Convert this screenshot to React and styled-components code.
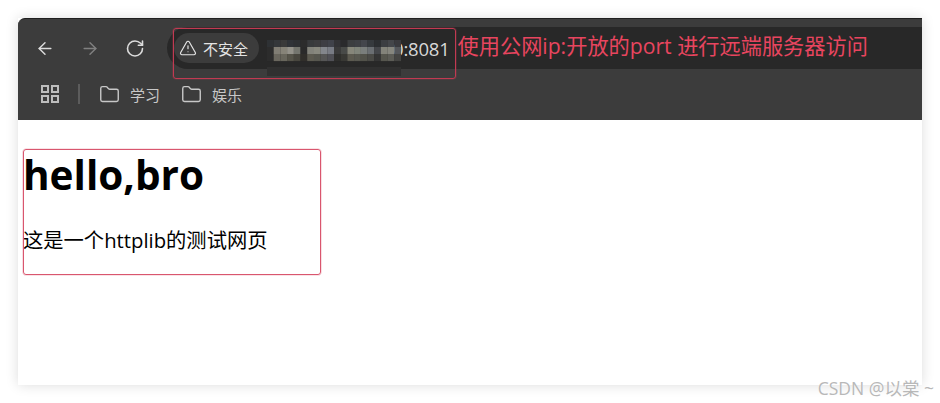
import React from "react";
import styled, { createGlobalStyle } from "styled-components";
import { ArrowLeft, ArrowRight, RotateCw, TriangleAlert, Folder } from "lucide-react";

const cjk = `"Noto Sans CJK SC", sans-serif`;
const Global = createGlobalStyle`
  html, body { margin: 0; padding: 0; background: #fff; }
  body { width: 940px; height: 403px; overflow: hidden; font-family: "Open Sans", ${cjk}; }
`;
const Page = styled.div`
  position: relative;
  width: 940px; height: 403px; padding: 18px; box-sizing: border-box; overflow: hidden;
`;
const Win = styled.div`
  width: 904px; height: 367px; background: #fff;
  box-shadow: 0 0 12px rgba(0,0,0,.14);
  display: flex; flex-direction: column;
`;
const Chrome = styled.header`
  height: 102px; background: #3c3c3c; border-top: 1px solid #1e1e1e; box-sizing: border-box;
  border-top-left-radius: 7px; display: flex; flex-direction: column;
`;
const NavRow = styled.div`
  height: 51px; padding-top: 8px; box-sizing: border-box; display: flex; align-items: stretch; padding-left: 17px;
`;
const NavBtns = styled.div`
  display: flex; align-items: center; gap: 25px; width: 132px; flex: none;
`;
const NavBtn = styled.span`
  display: flex; width: 20px; justify-content: center; color: ${p => (p.$off ? "#808080" : "#dcdcdc")};
`;
const UrlBar = styled.div`
  flex: 1; height: 42px; background: #282828; border-radius: 21px 0 0 21px;
  display: flex; align-items: center; padding-left: 7px;
`;
const Chip = styled.div`
  height: 30px; width: 85px; flex: none; background: #3c3c3c; border-radius: 15px; box-sizing: border-box;
  display: flex; align-items: center; gap: 6px; padding-left: 5px; color: #e4e4e4; font: 15px ${cjk};
`;
const Mosaic = styled.svg`
  flex: none; margin-left: 8px; display: block; align-self: flex-start; margin-top: 13px;
  position: relative; z-index: 1; filter: blur(.4px);
`;
const Port = styled.span`
  color: #d8d8d8; font: 18.5px "Open Sans", sans-serif; margin-left: -8px; letter-spacing: -.2px;
`;
const Note = styled.span`
  color: #e8455f; font: 21.2px "Open Sans", ${cjk}; margin: 0 0 8px 8px; white-space: nowrap;
`;
const Bookmarks = styled.div`
  flex: 1; display: flex; align-items: center; padding-left: 22px; padding-bottom: 2px; color: #bdbdbd;
`;
const Apps = styled.svg`
  flex: none; display: block;
`;
const Sep = styled.span`
  width: 2px; height: 20px; background: #5c5c5c; margin: 0 19px 0 18px; flex: none;
`;
const Mark = styled.span`
  display: flex; align-items: center; gap: 10px; font: 15px ${cjk}; color: #c8c8c8; margin-right: 21px;
`;
const Body = styled.main`
  flex: 1; padding: 4px 5px; color: #000;
`;
const Heading = styled.h1`
  margin: 23px 0 0 0; font: 700 40.5px/56px "Open Sans", ${cjk};
`;
const Para = styled.p`
  margin: 23px 0 0 0; font: 20.3px/28px "Open Sans", ${cjk};
`;
const Outline = styled.div`
  position: absolute; box-sizing: border-box; border: 1px solid ${p => p.$c};
  box-shadow: 0 0 0 .6px ${p => p.$c}55;
  border-radius: 3px; left: ${p => p.$x}px; top: ${p => p.$y}px; width: ${p => p.$w}px; height: ${p => p.$h}px;
  pointer-events: none;
`;
const Watermark = styled.span`
  position: absolute; right: 6px; top: 375px; font: 17.5px "Open Sans", ${cjk}; color: #b8b8b8; white-space: nowrap;
  text-shadow: 0 0 1px #fff;
`;

const rows = [
  ["#2e3134","#34373a","#3a3a3a","#303338","#2e3033","#2c2c2c","#383a3c","#3c3c3e","#3e3e44","#40424a","#333336","#2a2a2c","#3c3e40","#3e4044","#44464c","#363a3e","#2c2f32","#3c3e42","#44464a","#3a3a3e"],
  ["#2c2c2c","#807d74","#868378","#94928a","#74756e","#2a2a2a","#82827a","#88887e","#83868c","#787b84","#3a3a3a","#484a48","#86867a","#80847a","#7a7e7c","#6a6e72","#44464a","#83837a","#86867e","#54565a"],
  ["#2c2c2c","#6a675e","#68665c","#56544a","#48463e","#302e2a","#5c5a50","#56564e","#565656","#505056","#2e2e2c","#383834","#5c5a50","#585850","#52524a","#4a4a46","#343434","#56564e","#5c5c56","#444442"],
];

function App() {
  return (
    <Page>
      <Global />
      <Win>
        <Chrome>
          <NavRow>
            <NavBtns>
              <NavBtn><ArrowLeft size={27} strokeWidth={1.7} /></NavBtn>
              <NavBtn $off><ArrowRight size={27} strokeWidth={1.7} /></NavBtn>
              <NavBtn><RotateCw size={21} strokeWidth={1.9} /></NavBtn>
            </NavBtns>
            <UrlBar>
              <Chip><TriangleAlert size={18} strokeWidth={1.6} />不安全</Chip>
              <Mosaic width="134" height="36" viewBox="0 0 134 36">
                {rows.map((row, r) => row.map((c, i) => (
                  <rect key={`${r}-${i}`} x={i * 6.7} y={r * 7} width="6.8" height="7.1" fill={c} />
                )))}
                <rect x="0" y="27" width="134" height="9" fill="#303030" />
              </Mosaic>
              <Port>0:8081</Port>
              <Note>使用公网ip:开放的port 进行远端服务器访问</Note>
            </UrlBar>
          </NavRow>
          <Bookmarks>
            <Apps width="20" height="20" viewBox="0 0 20 20" fill="none" stroke="currentColor" strokeWidth="2">
              <rect x="2" y="2" width="6" height="6" /><rect x="12" y="2" width="6" height="6" />
              <rect x="2" y="12" width="6" height="6" /><rect x="12" y="12" width="6" height="6" />
            </Apps>
            <Sep />
            <Mark><Folder size={21} strokeWidth={1.6} />学习</Mark>
            <Mark><Folder size={21} strokeWidth={1.6} />娱乐</Mark>
          </Bookmarks>
        </Chrome>
        <Body>
          <Heading>hello,bro</Heading>
          <Para>这是一个httplib的测试网页</Para>
        </Body>
      </Win>
      <Outline $c="#c23a52" $x={173} $y={28} $w={283} $h={51} />
      <Outline $c="#d9566e" $x={23} $y={149} $w={298} $h={126} />
      <Watermark>CSDN @以棠 ~</Watermark>
    </Page>
  );
}
export default App;
